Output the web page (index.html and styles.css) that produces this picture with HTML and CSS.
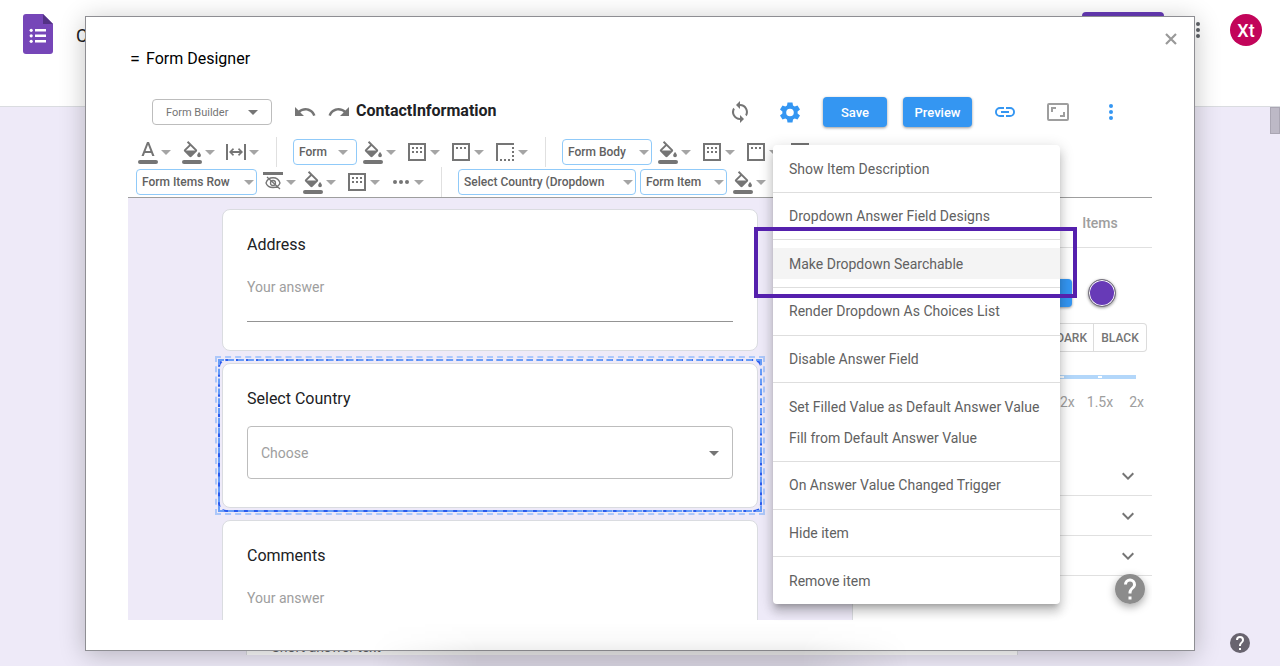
FILE: index.html
```html
<!DOCTYPE html>
<html lang="en">
<head>
<meta charset="utf-8">
<meta name="viewport" content="width=device-width, initial-scale=1">
<title>Form Designer</title>
<link rel="stylesheet" href="styles.css">
</head>
<body>
<svg class="sprite" aria-hidden="true">
  <symbol id="caret" viewBox="0 0 10 5"><path d="M0 0h10L5 5z"/></symbol>
  <symbol id="fill" viewBox="0 0 24 24"><path d="M16.56 6.94 7.62-2 6.21-.59l2.38 2.38-5.15 5.15a1.49 1.49 0 0 0 0 2.12l5.5 5.5c.29.29.68.44 1.06.44s.77-.15 1.06-.44l5.5-5.5c.59-.58.59-1.53 0-2.12zM5.21 8 10 3.21 14.79 8zM19 9.5s-2 2.17-2 3.5a2 2 0 0 0 4 0c0-1.33-2-3.5-2-3.5z" transform="translate(1 3) scale(.95)"/><rect x="2" y="20" width="20" height="4" rx="2"/></symbol>
  <symbol id="text" viewBox="0 0 24 24"><path d="M11 2 5.5 16h2.25l1.12-3h6.25l1.12 3h2.25L13 2zm-1.38 9L12 4.67 14.38 11z"/><rect x="2" y="20" width="20" height="4" rx="2"/></symbol>
  <symbol id="width" viewBox="0 0 24 24"><path d="M2 4h2v16H2zM20 4h2v16h-2zM5 12l4-4 1 1.400-1.700 1.700h7.400L14 9.400 15 8l4 4-4 4-1-1.400 1.700-1.700H8.300L10 14.600 9 16z"/></symbol>
  <symbol id="grid" viewBox="0 0 24 24"><path d="M3 3h18v18H3zm2 2v14h14V5z"/><path d="M7 7h2v2H7zm4 0h2v2h-2zm4 0h2v2h-2zm-8 4h2v2H7zm4 0h2v2h-2zm4 0h2v2h-2z"/></symbol>
  <symbol id="boxtop" viewBox="0 0 24 24"><path d="M3 3h18v18H3zm2 2v14h14V5z"/><path d="M7 7h2v2H7zm4 0h2v2h-2zm4 0h2v2h-2z"/></symbol>
  <symbol id="border" viewBox="0 0 24 24"><path d="M3 3h18v2H5v16H3zM7 19h2v2H7zm4 0h2v2h-2zm4 0h2v2h-2zm4 0h2v2h-2zm0-4h2v2h-2zm0-4h2v2h-2zm0-4h2v2h-2z"/></symbol>
  <symbol id="eyeoff" viewBox="0 0 24 24"><path d="M2 2h20v3H2z"/><path d="M5 13c2-7 12-7 14 0-2 6-12 6-14 0zM6 7l13 12" fill="none" stroke="currentColor" stroke-width="1.300"/><circle cx="12" cy="13" r="2.500" fill="none" stroke="currentColor" stroke-width="1.300"/></symbol>
  <symbol id="more" viewBox="0 0 24 24"><circle cx="6" cy="12" r="2"/><circle cx="12" cy="12" r="2"/><circle cx="18" cy="12" r="2"/></symbol>
  <symbol id="dots" viewBox="0 0 24 24"><circle cx="12" cy="6" r="2"/><circle cx="12" cy="12" r="2"/><circle cx="12" cy="18" r="2"/></symbol>
  <symbol id="undo" viewBox="0 0 24 24"><path d="M12.500 8c-2.650 0-5.050.99-6.900 2.600L2 7v9h9l-3.620-3.620c1.390-1.160 3.160-1.880 5.120-1.880 3.540 0 6.550 2.310 7.600 5.500l2.370-.78C21.080 11.030 17.150 8 12.500 8z"/></symbol>
  <symbol id="chevron" viewBox="0 0 24 24"><path d="M7.400 8.600 12 13.200l4.600-4.600L18 10l-6 6-6-6z"/></symbol>
  <symbol id="help" viewBox="0 0 20 20"><circle cx="10" cy="10" r="10"/><path d="M11 17H9v-2h2zm2.070-7.750-.9.920C11.450 10.900 11 11.500 11 13H9v-.5c0-1.100.45-2.100 1.170-2.830l1.240-1.260c.37-.36.59-.86.59-1.410a2 2 0 0 0-4 0H6a4 4 0 0 1 8 0c0 .88-.36 1.680-.93 2.250z" fill="#fff"/></symbol>
</svg>

<header class="app-bar">
  <svg class="app-logo" viewBox="0 0 30 40" aria-hidden="true"><path d="M3 0h17l10 10v27a3 3 0 0 1-3 3H3a3 3 0 0 1-3-3V3a3 3 0 0 1 3-3z" fill="#7646b8"/><path d="M20 0l10 10H20z" fill="#533285"/><path d="M12 15h11v2.500H12zm0 5.500h11V23H12zm0 5.500h11v2.500H12z" fill="#fff"/><g fill="#fff"><circle cx="8.200" cy="16.300" r="1.600"/><circle cx="8.200" cy="21.800" r="1.600"/><circle cx="8.200" cy="27.300" r="1.600"/></g></svg>
  <span class="app-name">ContactInformation</span>
  <div class="app-actions">
    <button class="send" type="button" aria-label="Send"></button>
    <button class="app-more" type="button" aria-label="More"><svg class="icon"><use href="#dots"/></svg></button>
    <button class="avatar" type="button">Xt</button>
  </div>
</header>
<main class="backdrop">
  <div class="scroll-thumb"></div>
  <div class="question">Short answer text</div>
  <button class="page-help" type="button" aria-label="Help"><svg><use href="#help"/></svg></button>
</main>

<section class="dialog" role="dialog" aria-label="Form Designer">
  <button class="close" type="button" aria-label="Close"><svg viewBox="0 0 12 12"><path d="M1 1l10 10M11 1 1 11" stroke="#999" stroke-width="2.200"/></svg></button>
  <h1 class="dialog-title"><span class="menu-mark">=</span> Form Designer</h1>

  <div class="toolbar">
    <div class="picker picker-main"><select aria-label="Mode"><option>Form Builder</option></select><svg class="caret"><use href="#caret"/></svg></div>
    <div class="history">
      <button type="button" aria-label="Undo"><svg class="icon"><use href="#undo"/></svg></button>
      <button type="button" aria-label="Redo"><svg class="icon flip"><use href="#undo"/></svg></button>
    </div>
    <h2 class="form-name">ContactInformation</h2>
    <div class="actions">
      <button class="action" type="button" aria-label="Refresh"><svg class="icon" viewBox="0 0 24 24"><path d="M12 4V1L8 5l4 4V6a6 6 0 0 1 5.250 8.800l1.460 1.460A8 8 0 0 0 12 4zm0 14a6 6 0 0 1-5.250-8.800L5.290 7.740A8 8 0 0 0 12 20v3l4-4-4-4z"/></svg></button>
      <button class="action blue" type="button" aria-label="Settings"><svg class="icon" viewBox="0 0 24 24"><path fill-rule="evenodd" d="M9.500 2.500h5l.5 3 1.700 1 2.800-1.100 2.500 4.200-2.400 1.900v2l2.400 1.900-2.500 4.200-2.800-1.100-1.700 1-.5 3h-5l-.5-3-1.700-1-2.800 1.100L2 15.400l2.400-1.900v-2L2 9.600l2.500-4.200 2.800 1.100 1.700-1zM12 8.700a3.800 3.800 0 1 0 0 7.600 3.800 3.800 0 0 0 0-7.600z"/></svg></button>
      <button class="primary" type="button">Save</button>
      <button class="primary" type="button">Preview</button>
      <div class="links">
        <button class="action blue" type="button" aria-label="Link"><svg class="icon" viewBox="0 0 24 24"><path d="M3.900 12A3.100 3.100 0 0 1 7 8.900h4V7H7a5 5 0 0 0 0 10h4v-1.900H7A3.100 3.100 0 0 1 3.900 12zM8 13h8v-2H8zm9-6h-4v1.900h4a3.100 3.100 0 0 1 0 6.200h-4V17h4a5 5 0 0 0 0-10z"/></svg></button>
        <button class="action pale" type="button" aria-label="Resize"><svg class="icon" viewBox="0 0 24 24"><path d="M19 12h-2v3h-3v2h5zM7 9h3V7H5v5h2zM21 3H3a2 2 0 0 0-2 2v14a2 2 0 0 0 2 2h18a2 2 0 0 0 2-2V5a2 2 0 0 0-2-2zm0 16H3V5h18z"/></svg></button>
        <button class="action blue" type="button" aria-label="Options"><svg class="icon" viewBox="0 0 24 24"><use href="#dots"/></svg></button>
      </div>
    </div>
  </div>

  <div class="format">
    <div class="format-row">
      <button class="tool" type="button" aria-label="Text color"><svg class="icon"><use href="#text"/></svg><svg class="caret"><use href="#caret"/></svg></button>
      <button class="tool" type="button" aria-label="Fill color"><svg class="icon"><use href="#fill"/></svg><svg class="caret"><use href="#caret"/></svg></button>
      <button class="tool" type="button" aria-label="Width"><svg class="icon"><use href="#width"/></svg><svg class="caret"><use href="#caret"/></svg></button>
      <span class="rule"></span>
      <div class="picker picker-form"><select aria-label="Form"><option>Form</option></select><svg class="caret"><use href="#caret"/></svg></div>
      <button class="tool" type="button" aria-label="Form fill"><svg class="icon"><use href="#fill"/></svg><svg class="caret"><use href="#caret"/></svg></button>
      <button class="tool" type="button" aria-label="Form padding"><svg class="icon"><use href="#grid"/></svg><svg class="caret"><use href="#caret"/></svg></button>
      <button class="tool" type="button" aria-label="Form header"><svg class="icon"><use href="#boxtop"/></svg><svg class="caret"><use href="#caret"/></svg></button>
      <button class="tool" type="button" aria-label="Form border"><svg class="icon"><use href="#border"/></svg><svg class="caret"><use href="#caret"/></svg></button>
      <span class="rule"></span>
      <div class="picker picker-body"><select aria-label="Form body"><option>Form Body</option></select><svg class="caret"><use href="#caret"/></svg></div>
      <button class="tool" type="button" aria-label="Body fill"><svg class="icon"><use href="#fill"/></svg><svg class="caret"><use href="#caret"/></svg></button>
      <button class="tool" type="button" aria-label="Body padding"><svg class="icon"><use href="#grid"/></svg><svg class="caret"><use href="#caret"/></svg></button>
      <button class="tool" type="button" aria-label="Body header"><svg class="icon"><use href="#boxtop"/></svg><svg class="caret"><use href="#caret"/></svg></button>
      <button class="tool" type="button" aria-label="Body border"><svg class="icon"><use href="#border"/></svg><svg class="caret"><use href="#caret"/></svg></button>
    </div>
    <div class="format-row">
      <div class="picker picker-row"><select aria-label="Row"><option>Form Items Row</option></select><svg class="caret"><use href="#caret"/></svg></div>
      <button class="tool narrow" type="button" aria-label="Visibility"><svg class="icon"><use href="#eyeoff"/></svg><svg class="caret"><use href="#caret"/></svg></button>
      <button class="tool" type="button" aria-label="Row fill"><svg class="icon"><use href="#fill"/></svg><svg class="caret"><use href="#caret"/></svg></button>
      <button class="tool" type="button" aria-label="Row padding"><svg class="icon"><use href="#grid"/></svg><svg class="caret"><use href="#caret"/></svg></button>
      <button class="tool" type="button" aria-label="More row options"><svg class="icon"><use href="#more"/></svg><svg class="caret"><use href="#caret"/></svg></button>
      <span class="rule"></span>
      <div class="picker picker-question"><select aria-label="Question"><option>Select Country (Dropdown</option></select><svg class="caret"><use href="#caret"/></svg></div>
      <div class="picker picker-item"><select aria-label="Item part"><option>Form Item</option></select><svg class="caret"><use href="#caret"/></svg></div>
      <button class="tool" type="button" aria-label="Item fill"><svg class="icon"><use href="#fill"/></svg><svg class="caret"><use href="#caret"/></svg></button>
    </div>
  </div>

  <div class="workspace">
    <div class="canvas">
      <div class="card">
        <label for="address">Address</label>
        <input class="answer" id="address" type="text" placeholder="Your answer">
      </div>
      <div class="card selected">
        <span class="ring"></span>
        <label for="country">Select Country</label>
        <div class="choose"><select id="country"><option>Choose</option></select><svg class="caret"><use href="#caret"/></svg></div>
      </div>
      <div class="card">
        <label for="comments">Comments</label>
        <input class="answer" id="comments" type="text" placeholder="Your answer">
      </div>
    </div>
    <aside class="panel">
      <div class="tabs"><button class="tab" type="button">Items</button></div>
      <div class="colors"><button class="apply" type="button" aria-label="Color"></button><button class="swatch" type="button" aria-label="Purple"></button></div>
      <div class="segments"><button type="button">DARK</button><button type="button">BLACK</button></div>
      <input class="scale" type="range" min="0" max="7" value="0" aria-label="Scale">
      <div class="scale-marks"><span>1.2x</span><span>1.5x</span><span>2x</span></div>
      <button class="fold" type="button" aria-label="Expand first section"><svg class="icon"><use href="#chevron"/></svg></button>
      <button class="fold" type="button" aria-label="Expand second section"><svg class="icon"><use href="#chevron"/></svg></button>
      <button class="fold" type="button" aria-label="Expand third section"><svg class="icon"><use href="#chevron"/></svg></button>
      <button class="panel-help" type="button" aria-label="Help"><svg><use href="#help"/></svg></button>
    </aside>
  </div>

  <div class="menu" role="menu">
    <button type="button" role="menuitem">Show Item Description</button>
    <hr>
    <button type="button" role="menuitem">Dropdown Answer Field Designs</button>
    <hr>
    <button class="active" type="button" role="menuitem">Make Dropdown Searchable</button>
    <hr>
    <button type="button" role="menuitem">Render Dropdown As Choices List</button>
    <hr>
    <button type="button" role="menuitem">Disable Answer Field</button>
    <hr>
    <div class="menu-group">
      <button type="button" role="menuitem">Set Filled Value as Default Answer Value</button>
      <button type="button" role="menuitem">Fill from Default Answer Value</button>
    </div>
    <hr>
    <button type="button" role="menuitem">On Answer Value Changed Trigger</button>
    <hr>
    <button type="button" role="menuitem">Hide item</button>
    <hr>
    <button type="button" role="menuitem">Remove item</button>
    <div class="highlight"></div>
  </div>
</section>
</body>
</html>
```
FILE: styles.css
```css
* { box-sizing: border-box; }

body {
  position: relative;
  display: flex;
  flex-direction: column;
  min-height: 100vh;
  margin: 0;
  font-family: Roboto, "Liberation Sans", sans-serif;
  color: #202124;
  background: #eeeaf8;
}

/* soft shade rising from the window's bottom edge */
body::after {
  content: "";
  position: absolute;
  left: 29%;
  right: 29%;
  bottom: 0;
  height: 44px;
  background: linear-gradient(to top, rgba(0, 0, 0, .1), rgba(0, 0, 0, .07) 30%, rgba(0, 0, 0, .02) 60%, transparent);
  mask-image: linear-gradient(to right, transparent, #000 20%, #000 80%, transparent);
  pointer-events: none;
}

button, select, input { margin: 0; font: inherit; color: inherit; }
button { padding: 0; border: 0; background: none; cursor: pointer; }
select { appearance: none; width: 100%; height: 100%; padding: 0 20px 0 5px; border: 0; background: none; }
.sprite { position: absolute; width: 0; height: 0; }
.icon { display: block; flex: none; width: 24px; height: 24px; fill: currentColor; }
.caret { flex: none; width: 10px; height: 5px; fill: #a5a5a5; }
.flip { transform: scaleX(-1); }

/* page behind the dialog */
.app-bar {
  display: flex;
  align-items: flex-start;
  flex: none;
  height: 107px;
  padding: 14px 18px 0 23px;
  background: #fff;
  border-bottom: 1px solid #dadce0;
}
.app-logo { width: 30px; height: 40px; }
.app-name { margin-left: 23px; font-size: 18px; line-height: 44px; }
.app-actions { display: flex; margin-left: auto; }
.send { width: 82px; height: 36px; margin: -2px 22px 0 0; border-radius: 4px; background: #673ab7; }
.app-more { width: 24px; height: 32px; margin-right: 20px; color: #5f6368; }
.avatar { width: 32px; height: 32px; border-radius: 50%; background: #c2045a; color: #fff; font-size: 18px; font-weight: 500; }
.backdrop { position: relative; display: flex; flex: 1; justify-content: center; align-items: flex-end; padding: 0 16px 11px 0; }
.question { width: 61%; padding: 8px 24px 0; background: #fff; border: 1px solid #dadce0; border-width: 0 1px; font-size: 14px; line-height: 15px; color: #5f6368; }
.scroll-thumb { position: absolute; top: 0; right: 0; width: 10px; height: 27px; background: #bdb9c6; border: 1px solid #aaa6b3; }
.page-help { position: absolute; right: 30px; bottom: 13px; width: 20px; height: 20px; }
.page-help svg { display: block; width: 20px; height: 20px; fill: #68646f; }

/* dialog */
.dialog {
  position: absolute;
  inset: 16px 85px 15px;
  display: flex;
  flex-direction: column;
  padding: 28px 42px 30px;
  background: #fff;
  border: 1px solid #8e8e93;
  box-shadow: 0 4px 24px rgba(0, 0, 0, .24);
}
.dialog-title { display: flex; margin: 0 0 19px 2px; font-size: 16px; font-weight: 400; line-height: 28px; color: #000; }
.menu-mark { width: 16px; font-size: 18px; }
.close { position: absolute; top: 16px; right: 17px; width: 12px; height: 12px; }
.close svg { display: block; }

.toolbar { display: flex; align-items: center; height: 40px; padding: 0 16px 0 24px; }
.picker { position: relative; flex: none; height: 26px; border: 1px solid #90caf9; border-radius: 4px; font-size: 12px; font-weight: 500; color: #616161; }
.picker .caret { position: absolute; top: 10px; right: 2px; pointer-events: none; }
.picker-main { width: 120px; border-color: #bdbdbd; font-size: 11px; font-weight: 400; color: #757575; }
.picker-main select { padding-left: 13px; }
.picker-main .caret { right: 13px; fill: #757575; }
.history { display: flex; gap: 10px; margin: 0 5px 0 21px; color: #757575; }
.form-name { margin: 0 0 3px; font-size: 16px; font-weight: 700; }
.actions { display: flex; align-items: center; margin-left: auto; }
.action { display: flex; justify-content: center; width: 50px; color: #757575; }
.action.blue { color: #3496f2; }
.action.pale { color: #9e9e9e; }
.links { display: flex; gap: 3px; margin-left: 8px; }
.primary { height: 30px; margin-left: 8px; padding: 0 10px; border-radius: 4px; background: #3496f2; color: #fff; font-size: 13px; font-weight: 500; box-shadow: 0 1px 3px rgba(0, 0, 0, .4); min-width: 64px; }
.primary + .primary { min-width: 69px; margin-left: 16px; }

.format { margin-top: 5px; border-bottom: 1px solid #9e9e9e; }
.format-row { display: flex; align-items: center; height: 30px; padding-left: 6px; color: #757575; }
.format-row + .format-row { padding-left: 8px; }
.tool { display: flex; flex: none; align-items: center; gap: 1px; width: 44px; padding-left: 2px; }
.tool.narrow { width: 40px; }
.rule { flex: none; width: 1px; height: 30px; margin: 0 16px 0 10px; background: #e0e0e0; }
.format .picker { margin-right: 2px; }
.picker-form { width: 64px; }
.picker-form .caret { right: 8px; }
.picker-body { width: 90px; }
.picker-row { width: 121px; }
.picker-question { width: 178px; }
.picker-item { width: 87px; margin-left: 2px; }

/* workspace */
.workspace { display: flex; flex: 1; min-height: 0; overflow: hidden; }
.canvas { display: flex; flex: 1; flex-direction: column; align-items: center; gap: 12px; padding: 11px 94px 0; background: #eeeaf8; }
.card { position: relative; flex: none; width: 100%; padding: 23px 24px 28px; background: #fff; border: 1px solid #dadce0; border-radius: 8px; }
.card label { display: block; margin-bottom: 15px; font-size: 16px; line-height: 24px; }
.answer { display: block; width: 100%; height: 50px; padding: 0 0 20px; border: 0; border-bottom: 1px solid #949494; font-size: 14px; background: none; }
.answer::placeholder { color: #9e9e9e; opacity: 1; }
.choose { position: relative; height: 53px; border: 1px solid #bdbdbd; border-radius: 4px; font-size: 14px; color: #9e9e9e; }
.choose select { padding-left: 13px; }
.choose .caret { position: absolute; top: 24px; right: 13px; fill: #757575; pointer-events: none; }
.ring { position: absolute; inset: -8px; border: 2px dashed #adc8fa; pointer-events: none; }
.ring::before, .ring::after { content: ""; position: absolute; inset: 1px; border: 2px dashed #2a5bee; border-radius: 8px; }
.ring::after { border-color: #689df8; border-radius: 0; }

.panel { position: relative; width: 300px; border-left: 1px solid #dadce0; background: #fff; color: #757575; }
.tabs { display: flex; justify-content: flex-end; height: 50px; border-bottom: 1px solid #e0e0e0; }
.tab { width: 104px; font-size: 14px; font-weight: 500; color: #9e9e9e; }
.colors { display: flex; justify-content: flex-end; gap: 16px; margin: 31px 36px 16px 0; }
.apply { width: 64px; height: 28px; border-radius: 4px; background: #3496f2; box-shadow: 0 1px 3px rgba(0, 0, 0, .4); }
.swatch { width: 28px; height: 28px; border: 1px solid #777; border-radius: 50%; background: #673ab7; box-shadow: inset 0 0 0 1px #fff, 0 1px 3px rgba(0, 0, 0, .4); }
.segments { display: flex; justify-content: flex-end; margin-right: 5px; }
.segments button { height: 29px; padding: 0 6px; border: 1px solid #dcdcdc; font-size: 12px; font-weight: 500; }
.segments button + button { width: 53px; border-left: 0; border-radius: 0 4px 4px 0; }
.scale { appearance: none; display: block; width: 266px; height: 4px; margin: 23px 16px 13px auto; background: repeating-linear-gradient(to left, transparent 0 34px, #fff 34px 38px) center / 100% 2px no-repeat, #b3d7fa; }
.scale::-webkit-slider-thumb { appearance: none; width: 12px; height: 12px; border-radius: 50%; background: #3496f2; }
.scale-marks { display: flex; justify-content: flex-end; gap: 16px; margin: 0 8px 44px 0; font-size: 14px; line-height: 20px; color: #9e9e9e; }
.scale-marks span:first-child { margin-right: -4px; }
.fold { display: flex; align-items: center; justify-content: flex-end; width: 100%; height: 40px; padding-right: 12px; border-bottom: 1px solid #e0e0e0; }
.panel-help { position: absolute; right: 7px; bottom: 16px; width: 30px; height: 30px; border-radius: 50%; box-shadow: 0 3px 8px rgba(0, 0, 0, .35); }
.panel-help svg { display: block; width: 30px; height: 30px; fill: #8c8c8c; }

/* context menu */
.menu {
  position: absolute;
  top: 128px;
  right: 134px;
  display: flex;
  flex-direction: column;
  justify-content: space-between;
  width: 287px;
  height: 459px;
  padding: 8px 0;
  border-radius: 4px;
  background: #fff;
  box-shadow: 0 5px 5px -3px rgba(0, 0, 0, .2), 0 8px 10px 1px rgba(0, 0, 0, .14), 0 3px 14px 2px rgba(0, 0, 0, .12);
}
.menu button { display: block; width: 100%; height: 31px; padding: 0 16px; text-align: left; font-size: 14px; color: #616161; white-space: nowrap; }
.menu .active { background: #f4f4f4; }
.menu hr { width: 100%; height: 1px; margin: 0; border: 0; background: #dedede; }
.highlight { position: absolute; top: 82px; left: -19px; right: -17px; height: 71px; border: 4px solid #5520ad; pointer-events: none; }
```
